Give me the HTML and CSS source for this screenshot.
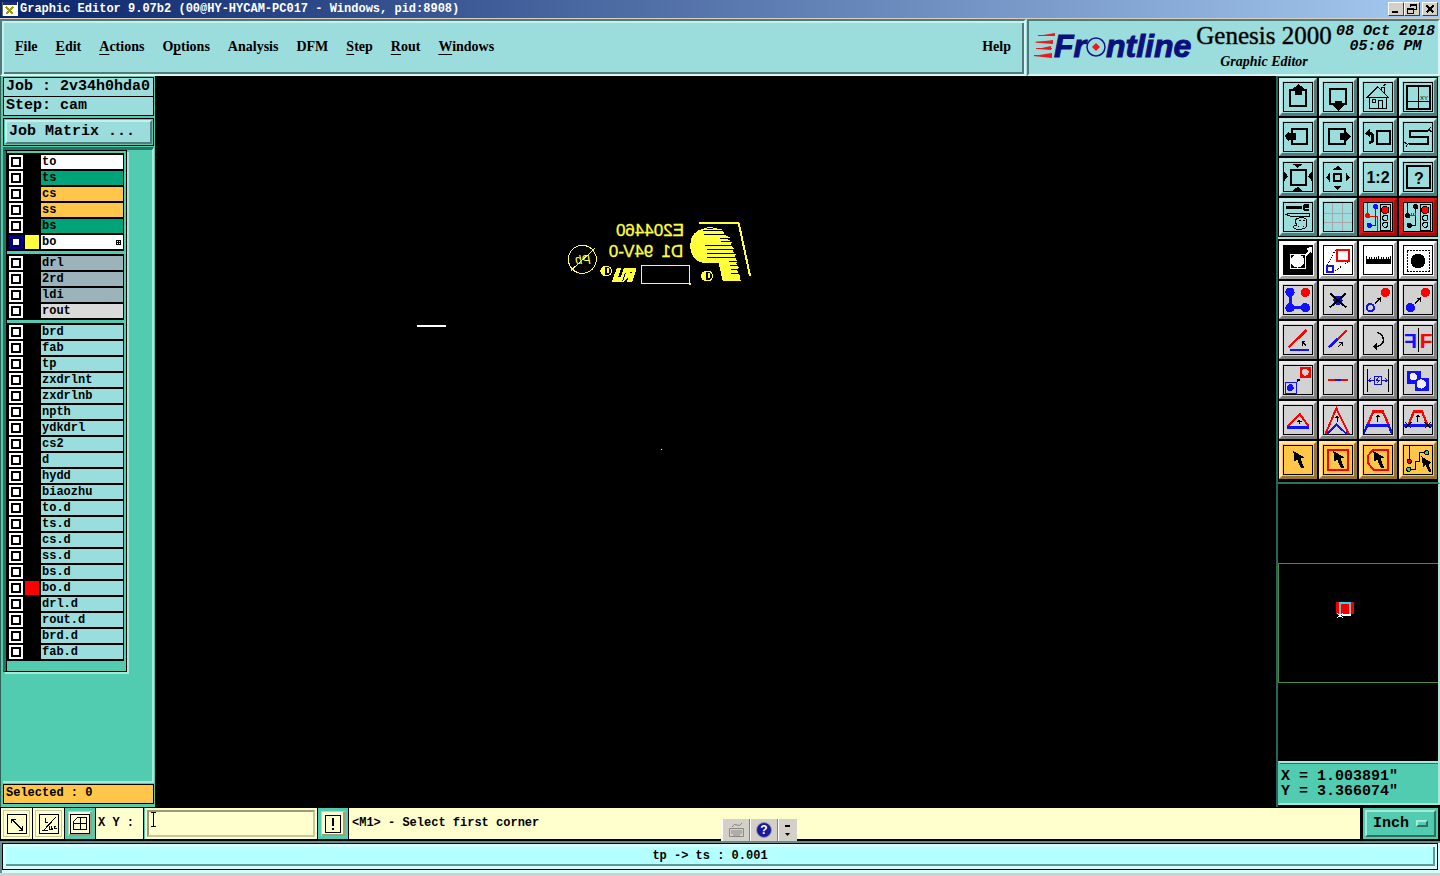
FILE: index.html
```html
<!DOCTYPE html>
<html lang="en">
<head>
<meta charset="utf-8">
<title>Graphic Editor 9.07b2</title>
<link rel="stylesheet" href="styles.css">
</head>
<body>
<div class="titlebar">
  <svg class="app-icon" viewBox="0 0 16 14"><rect width="16" height="14" fill="#fff"/><rect x="1" y="0" width="14" height="3" fill="#1c2a78"/><path d="M4 5l7 7M11 5l-7 7" stroke="#a09a10" stroke-width="2"/><path d="M0 14V0M16 0v14H0" stroke="#666" fill="none"/></svg>
  <h1 class="window-title">Graphic Editor 9.07b2 (00@HY-HYCAM-PC017 - Windows, pid:8908)</h1>
  <div class="window-controls">
    <button class="win-btn" aria-label="Minimize"><svg viewBox="0 0 12 10"><path d="M2 8h6" stroke="#000" stroke-width="2"/></svg></button>
    <button class="win-btn" aria-label="Restore"><svg viewBox="0 0 12 10"><path d="M4.500 3V.5h6v5H8M4 1.500h7M1.500 4.500h6v5h-6zM1 5.500h7" stroke="#000" fill="none"/></svg></button>
    <button class="win-btn win-close" aria-label="Close"><svg viewBox="0 0 12 10"><path d="M2.500 1.500l7 7M9.500 1.500l-7 7" stroke="#000" stroke-width="1.600"/></svg></button>
  </div>
</div>

<header class="header">
  <nav class="menubar">
    <button class="menu"><u>F</u>ile</button>
    <button class="menu"><u>E</u>dit</button>
    <button class="menu"><u>A</u>ctions</button>
    <button class="menu">O<u>p</u>tions</button>
    <button class="menu">Analysis</button>
    <button class="menu">DFM</button>
    <button class="menu"><u>S</u>tep</button>
    <button class="menu"><u>R</u>out</button>
    <button class="menu"><u>W</u>indows</button>
    <button class="menu menu-help">Help</button>
  </nav>
  <div class="brand">
    <svg class="logo" viewBox="0 -8 162 42" role="img" aria-label="Frontline">
      <path d="M4 3L22 0v3zM1 9.500L20 7v4zM4 16l14-3v4zM0 23l19-3v5z" fill="#f01818"/>
      <path d="M5 2.500h16M3 9h16M3 15.500h16M1 22.500h17" stroke="#f01818"/>
      <text class="logo-text" x="21" y="24">Fr</text>
      <text class="logo-text" x="73" y="24">ntline</text>
      <circle cx="63" cy="14" r="9" fill="#9bdcdc" stroke="#101890" stroke-width="1.500"/>
      <path d="M63 10l4 4-4 4-4-4z" fill="#f01818"/>
    </svg>
    <div class="product">
      <div class="product-name">Genesis 2000</div>
      <div class="product-part">Graphic Editor</div>
    </div>
    <div class="clock">08 Oct 2018<br>05:06 PM</div>
  </div>
</header>

<main class="workspace">
  <aside class="sidebar">
    <div class="job-box">
      <div class="job-line">Job : 2v34h0hda0</div>
      <div class="job-line">Step: cam</div>
    </div>
    <div class="matrix-box"><button class="matrix-btn">Job Matrix ...</button></div>
    <div class="layer-area">
      <div class="layer-list">
        <div class="layer-group">
          <label class="layer white"><input type="checkbox"><i></i><span>to</span></label>
          <label class="layer green"><input type="checkbox"><i></i><span>ts</span></label>
          <label class="layer orange"><input type="checkbox"><i></i><span>cs</span></label>
          <label class="layer orange"><input type="checkbox"><i></i><span>ss</span></label>
          <label class="layer green"><input type="checkbox"><i></i><span>bs</span></label>
          <label class="layer white work"><input type="checkbox" checked><i class="yellow"></i><span>bo<svg class="grid-mark" viewBox="0 0 5 5"><path d="M.5.5h4v4h-4zM2.500 0v5M0 2.500h5" fill="none" stroke="#000"/></svg></span></label>
        </div>
        <div class="layer-group">
          <label class="layer slate"><input type="checkbox"><i></i><span>drl</span></label>
          <label class="layer slate"><input type="checkbox"><i></i><span>2rd</span></label>
          <label class="layer slate"><input type="checkbox"><i></i><span>ldi</span></label>
          <label class="layer silver"><input type="checkbox"><i></i><span>rout</span></label>
        </div>
        <div class="layer-group">
          <label class="layer"><input type="checkbox"><i></i><span>brd</span></label>
          <label class="layer"><input type="checkbox"><i></i><span>fab</span></label>
          <label class="layer"><input type="checkbox"><i></i><span>tp</span></label>
          <label class="layer"><input type="checkbox"><i></i><span>zxdrlnt</span></label>
          <label class="layer"><input type="checkbox"><i></i><span>zxdrlnb</span></label>
          <label class="layer"><input type="checkbox"><i></i><span>npth</span></label>
          <label class="layer"><input type="checkbox"><i></i><span>ydkdrl</span></label>
          <label class="layer"><input type="checkbox"><i></i><span>cs2</span></label>
          <label class="layer"><input type="checkbox"><i></i><span>d</span></label>
          <label class="layer"><input type="checkbox"><i></i><span>hydd</span></label>
          <label class="layer"><input type="checkbox"><i></i><span>biaozhu</span></label>
          <label class="layer"><input type="checkbox"><i></i><span>to.d</span></label>
          <label class="layer"><input type="checkbox"><i></i><span>ts.d</span></label>
          <label class="layer"><input type="checkbox"><i></i><span>cs.d</span></label>
          <label class="layer"><input type="checkbox"><i></i><span>ss.d</span></label>
          <label class="layer"><input type="checkbox"><i></i><span>bs.d</span></label>
          <label class="layer"><input type="checkbox"><i class="red"></i><span>bo.d</span></label>
          <label class="layer"><input type="checkbox"><i></i><span>drl.d</span></label>
          <label class="layer"><input type="checkbox"><i></i><span>rout.d</span></label>
          <label class="layer"><input type="checkbox"><i></i><span>brd.d</span></label>
          <label class="layer"><input type="checkbox"><i></i><span>fab.d</span></label>
        </div>
      </div>
    </div>
    <div class="selected">Selected : 0</div>
  </aside>

  <section class="canvas" aria-label="Drawing area">
    <svg class="artwork" viewBox="0 0 600 255">
      <g fill="#ffff3c" stroke="none">
        <text class="mark" transform="translate(372 78) scale(-1 1)">E204460</text>
        <text class="mark" transform="translate(370 142) scale(-1 1)">D1</text>
        <text class="mark" transform="translate(280 142) scale(-1 1)">94V-0</text>
        <text class="mark-pb" transform="translate(92 162) scale(-1 1)">Pb</text>
        <path d="M434 56h52l8 18 16 8-6 6 12 9-4 8 10 10-4 8 10 10-4 8 8 12-4 8 8 12-4 8 6 12 4 20h-54l-12-54h-38c-30 0-48-24-48-52 0-29 18-51 46-51z"/>
        <path d="M171 174h13l-9 26h8l9-26h38l-13 41h-16l4-12-15 12h-34l4-14z"/>
        <path d="M136 168a15 15 0 0 0 0 30zM438 183a15 15 0 0 0 0 30z"/>
      </g>
      <path d="M196 188l-8 26M210 186h6" stroke="#000" stroke-width="3"/>
      <path d="M436 105h82M440 117h84M440 129h86M442 141h90M428 61h60M432 73h68M480 85h34M484 95h38M508 153h26M510 165h26M512 177h26M514 189h26" stroke="#000" stroke-width="3"/>
      <g fill="none" stroke="#ffff3c">
        <path d="M418 39h118M536 39l34 158" stroke-width="6"/>
        <path d="M428 58q24-10 44 0" stroke-width="3"/>
        <circle cx="67" cy="148" r="42" stroke-width="3"/>
        <path d="M32 182l72-66M244 167h145v54h-145z" stroke-width="3"/>
        <circle cx="141" cy="183" r="14" stroke-width="3"/><circle cx="443" cy="198" r="15" stroke-width="3"/>
        <path d="M145 174v16M447 189v16" stroke-width="6"/>
      </g>
      <rect x="386" y="218" width="7" height="6" fill="#ffff3c"/>
    </svg>
    <span class="trace"></span>
    <span class="dot"></span>
  </section>

  <aside class="tools">
    <div class="tool-grid cyan-tools">
      <button class="tool" aria-label="Pan up"><svg viewBox="16 15 84 84"><path class="k6" d="M35 37h48v46H35z"/><path class="f" d="M60 18l16 14h-6v18H49V32h-6z"/></svg></button>
      <button class="tool" aria-label="Pan down"><svg viewBox="16 15 84 84"><path class="k6" d="M35 33h48v45H35z"/><path class="f" d="M49 68h21v14h6L60 98 43 82h6z"/></svg></button>
      <button class="tool" aria-label="Home"><svg viewBox="16 15 84 84"><path class="k3" d="M26 58l31-32 31 32zM33 56v35h49V56M58 91V66h14v25M40 64h9v9h-9zM69 36V28h9v18M72 24l9-5"/></svg></button>
      <button class="tool" aria-label="Coordinates"><svg viewBox="16 15 84 84"><path class="k6" d="M24 24h69v68H24z"/><path class="k3" d="M58 24v68M24 70h69"/><text class="xy" x="64" y="66">XY</text></svg></button>
      <button class="tool" aria-label="Pan left"><svg viewBox="16 15 84 84"><path class="k6" d="M40 33h46v46H40z"/><path class="f" d="M18 55l14-16v6h20v21H32v6z"/></svg></button>
      <button class="tool" aria-label="Pan right"><svg viewBox="16 15 84 84"><path class="k6" d="M30 33h48v46H30z"/><path class="f" d="M97 55L82 39v6H64v21h18v6z"/></svg></button>
      <button class="tool" aria-label="Previous view"><svg viewBox="16 15 84 84"><path class="k6" d="M55 38h38v41H55z"/><path d="M30 47h8q4 0 4 6v12q0 8-12 10" fill="none" stroke="#000" stroke-width="8"/><path class="f" d="M19 46l14-12v24z"/></svg></button>
      <button class="tool" aria-label="Serpentine"><svg viewBox="16 15 84 84"><path class="k6" d="M88 38H33v19h54v20H30"/><path class="k3" d="M86 40l8-8M92 38v-6l6-4M92 36l6 6M30 76l-8 8M24 78l-6-6M24 80v6"/></svg></button>
      <button class="tool" aria-label="Zoom in"><svg viewBox="16 15 84 84"><path class="k6" d="M36 35h45v45H36z"/><path class="f" d="M42 18h30L57 29zM42 98h30L57 86zM16 40l12 15L16 70zM100 40L88 55l12 15z"/></svg></button>
      <button class="tool" aria-label="Zoom out"><svg viewBox="16 15 84 84"><path class="k6" d="M46 47h22v22H46z"/><path class="f" d="M57 23l14 12H43zM57 95l14-12H43zM23 58l11-15v30zM93 58L81 43v30z"/></svg></button>
      <button class="tool" aria-label="Scale 1:2"><svg viewBox="16 15 84 84"><text class="ratio" x="58" y="75">1:2</text></svg></button>
      <button class="tool" aria-label="Query"><svg viewBox="16 15 84 84"><path class="k6" d="M24 25h69v66H24z"/><text class="query" x="61" y="78">?</text></svg></button>
      <button class="tool" aria-label="Settings"><svg viewBox="16 15 84 84"><path d="M22 28h48" stroke="#000" stroke-width="8"/><path d="M92 20H78q-6 8 0 16h14M80 28h12" class="k6"/><path class="k3" d="M22 49l12-3h58v8H34zM50 66q8-10 26-6 12 2 8 14-4 4 0 10-4 10-22 10-20 0-18-8 2-6 10-4 2-4-4-8zM62 66h4M74 68h4M58 86h4M72 84h4"/></svg></button>
      <button class="tool" aria-label="Grid"><svg viewBox="16 15 84 84"><path d="M42 15v84M72 15v84M16 45h84M16 74h84" stroke="#a9a5a8" stroke-width="3"/></svg></button>
      <button class="tool alert" aria-label="Net check red"><svg viewBox="16 15 84 84"><path d="M27 16v38h29v45" fill="none" stroke="#f00" stroke-width="3"/><path d="M51 26v56H32" fill="none" stroke="#11f" stroke-width="4"/><circle cx="27" cy="53" r="8" fill="#f00"/><circle cx="51" cy="26" r="8" fill="#11f"/><circle cx="32" cy="82" r="8" fill="#11f"/><path class="k3" d="M64 18h32v78H64z"/><circle cx="80" cy="36" r="11" fill="#f00" stroke="#000" stroke-width="3"/><circle class="k3" cx="80" cy="60" r="8"/><circle class="k3" cx="80" cy="80" r="8"/></svg></button>
      <button class="tool alert" aria-label="Net check black"><svg viewBox="16 15 84 84"><path class="k3" d="M27 16v38M51 26v56H32M64 18h32v78H64z"/><circle cx="27" cy="53" r="8"/><circle cx="51" cy="26" r="8"/><circle cx="32" cy="82" r="8"/><path d="M35 53h16M37 44v8M43 44v8M49 44v8" stroke="#f00" stroke-width="3"/><circle cx="80" cy="36" r="11" fill="#f00" stroke="#000" stroke-width="3"/><circle class="k3" cx="80" cy="60" r="8"/><circle class="k3" cx="80" cy="80" r="8"/></svg></button>
    </div>
    <div class="tool-grid grey-tools">
      <button class="tool plain" aria-label="Change"><svg viewBox="16 15 84 84"><path class="f" d="M16 15h84v84H16z"/><circle cx="57" cy="60" r="20" fill="#fff"/><path d="M35 39h45v43H35z" fill="none" stroke="#fff" stroke-width="3"/><path d="M78 42l12-12-8-6 18-8v20l-6-2-12 14z" fill="#fff"/></svg></button>
      <button class="tool plain" aria-label="Transform"><svg viewBox="16 15 84 84"><path class="k3 dash" d="M25 72L52 24M44 92l50-32"/><path class="r6" d="M56 26h35v35H56z"/><path class="b6" d="M26 74h18v18H26z"/></svg></button>
      <button class="tool plain" aria-label="Measure"><svg viewBox="16 15 84 84"><path class="f" d="M22 54h75v14H22z"/><path class="k3" d="M23 44v12M31 48v8M38 48v8M46 48v8M53 48v8M60 44v12M67 48v8M74 48v8M82 48v8M89 48v8M95 44v12"/></svg></button>
      <button class="tool plain" aria-label="Pad"><svg viewBox="16 15 84 84"><path d="M26 27h65v65H26z" fill="none" stroke="#000" stroke-width="3" stroke-dasharray="6 3"/><circle cx="58" cy="60" r="22"/></svg></button>
      <button class="tool" aria-label="Copy pads"><svg viewBox="16 15 84 84"><path d="M34 34v46h46" fill="none" stroke="#11f" stroke-width="9"/><g fill="#11f"><circle cx="34" cy="34" r="14"/><circle cx="34" cy="80" r="14"/><circle cx="80" cy="80" r="14"/></g><circle cx="80" cy="34" r="14" fill="#f00"/></svg></button>
      <button class="tool" aria-label="Delete"><svg viewBox="16 15 84 84"><circle cx="58" cy="58" r="14" fill="#11c"/><path d="M34 37l48 42M82 37L34 79" stroke="#000" stroke-width="6"/></svg></button>
      <button class="tool" aria-label="Move copy"><svg viewBox="16 15 84 84"><circle cx="35" cy="80" r="11" fill="none" stroke="#11f" stroke-width="6"/><circle cx="80" cy="34" r="14" fill="#f00"/><path class="k3" d="M48 68l18-18M54 51h12v12"/></svg></button>
      <button class="tool" aria-label="Move"><svg viewBox="16 15 84 84"><circle cx="35" cy="80" r="14" fill="#11f"/><circle cx="80" cy="34" r="14" fill="#f00"/><path class="k3" d="M48 68l18-18M54 51h12v12"/></svg></button>
      <button class="tool" aria-label="Rotate line"><svg viewBox="16 15 84 84"><path class="r7" d="M30 79l54-52"/><path class="b6" d="M34 86h56"/><path class="k3" d="M82 74L70 62M70 74V62h10"/></svg></button>
      <button class="tool" aria-label="Extend line"><svg viewBox="16 15 84 84"><path class="b7" d="M30 80l28-27"/><path class="r7" d="M56 55l27-27"/><path class="k3" d="M60 77l12-13M61 65h11v11"/></svg></button>
      <button class="tool" aria-label="Rotate"><svg viewBox="16 15 84 84"><path d="M54 34q20 4 20 23 0 18-24 20" fill="none" stroke="#000" stroke-width="4"/><path class="f" d="M42 77l12-10v20z"/></svg></button>
      <button class="tool" aria-label="Mirror"><svg viewBox="16 15 84 84"><path class="k3" d="M59 22v72"/><text class="flip" x="63" y="82" fill="#f00">F</text><text class="flip" transform="translate(55 82) scale(-1 1)" fill="#11f">F</text></svg></button>
      <button class="tool" aria-label="Step move"><svg viewBox="16 15 84 84"><path fill="#f00" d="M64 18h33v33H64z"/><circle cx="80" cy="34" r="10" fill="#d2d2d2"/><path d="M21 65h31v31H21z" fill="none" stroke="#11f" stroke-width="3"/><circle cx="35" cy="80" r="10" fill="#11f"/><path class="k3" d="M54 62l8-8M56 54h7v7"/></svg></button>
      <button class="tool" aria-label="Break line"><svg viewBox="16 15 84 84"><path class="r7" d="M27 56h62"/><path class="b7" d="M48 56h20"/></svg></button>
      <button class="tool" aria-label="Resize gap"><svg viewBox="16 15 84 84"><path class="k3" d="M27 24v70M89 24v70"/><path d="M48 45h20v26H48zM31 58h16M70 58h15M36 52l-6 6 6 6M80 52l6 6-6 6M60 49l-6 8h8l-6 9" fill="none" stroke="#11c" stroke-width="3"/></svg></button>
      <button class="tool" aria-label="Merge"><svg viewBox="16 15 84 84"><path fill="#11f" d="M26 30h42v20h24v40H50V70H26z"/><circle cx="44" cy="47" r="11" fill="#f0f0f0"/><circle cx="68" cy="69" r="14" fill="#f0f0f0"/></svg></button>
      <button class="tool" aria-label="Shape low"><svg viewBox="16 15 84 84"><path d="M27 76l37-36 26 36" fill="none" stroke="#f00" stroke-width="6"/><path class="b7" d="M25 79h66"/><path class="k3" d="M62 70V58M56 63l6-5 6 5"/></svg></button>
      <button class="tool" aria-label="Shape high"><svg viewBox="16 15 84 84"><path d="M20 100l33-78 38 78" fill="none" stroke="#f00" stroke-width="6"/><path d="M25 99l29-28 30 28" fill="none" stroke="#11f" stroke-width="6"/><path class="k3" d="M56 62V46M50 52l6-6 6 6"/></svg></button>
      <button class="tool" aria-label="Shape wide"><svg viewBox="16 15 84 84"><path class="r7" d="M27 72l17-41h28l18 41"/><path class="b7" d="M14 98l12-25h64l10 25"/><path class="k3" d="M57 62V43M51 49l6-6 6 6"/></svg></button>
      <button class="tool" aria-label="Shape cut"><svg viewBox="16 15 84 84"><path class="r7" d="M29 72l17-41h24l16 41"/><path class="b7" d="M16 73h84"/><path class="k3" d="M57 62V43M51 49l6-6 6 6M20 64l18 18M38 64L20 82M78 64l18 18M96 64L78 82"/></svg></button>
      <button class="tool amber" aria-label="Select"><svg viewBox="16 15 84 84"><path class="f" d="M44 30l4 32 8-6 11 27 9-4-11-26 11-4z"/></svg></button>
      <button class="tool amber" aria-label="Select rectangle"><svg viewBox="16 15 84 84"><path class="r6" d="M28 26h61v60H28z"/><path class="f" d="M44 30l4 32 8-6 11 27 9-4-11-26 11-4z"/></svg></button>
      <button class="tool amber" aria-label="Select polygon"><svg viewBox="16 15 84 84"><path class="r6" d="M44 26h45v60H44L28 66V44z"/><path class="f" d="M44 30l4 32 8-6 11 27 9-4-11-26 11-4z"/></svg></button>
      <button class="tool amber" aria-label="Select net"><svg viewBox="16 15 84 84"><path class="k3" d="M32 16v40M84 35H61v25H50v25H30"/><g stroke="#000" stroke-width="3"><circle cx="32" cy="61" r="6" fill="#e00"/><circle cx="84" cy="35" r="6" fill="#1e3"/><circle cx="30" cy="85" r="6" fill="#1e3"/></g><path class="f" d="M68 46l6 33 7-7 10 22 8-3-10-22 10-4z"/></svg></button>
    </div>
    <div class="overview">
      <svg viewBox="0 0 20 16" class="overview-mark"><path fill="#e00" d="M1 0h18v12H1z"/><path d="M5 12V1h10v11" fill="none" stroke="#9aa" stroke-width="2"/><path d="M4 1h12" stroke="#2de" stroke-width="2"/><path d="M7 13h9" stroke="#fff" stroke-width="2"/><path d="M2 11l6 5M8 11l-6 5" stroke="#fff"/></svg>
    </div>
    <div class="coords">X = 1.003891"<br>Y = 3.366074"</div>
  </aside>
</main>

<footer class="command">
  <button class="cmd-btn" aria-label="Relative"><svg viewBox="0 0 20 20"><path d="M.5.5h19v19H.5zM4.500 5l11 11M4.500 9V5h4M15.500 12v4h-4"/></svg></button>
  <button class="cmd-btn" aria-label="Angle"><svg viewBox="0 0 20 20"><path d="M.5.5h19v19H.5zM3 16h6M4 17L17 3M6 4v4h3M11 12h-1v3h2v-3l2 4M17 12h-2v2h3"/></svg></button>
  <button class="cmd-btn cmd-on" aria-label="Snap"><svg viewBox="0 0 20 20"><path d="M.5.5h19v19H.5zM3.500 15.500v-8l4-4h9v12zM3.500 9.500h13M10.500 3v13"/></svg></button>
  <label class="xy-label" for="xy">X Y :</label>
  <div class="xy-wrap"><input id="xy" class="xy-input" type="text"><svg class="caret" viewBox="0 0 7 15"><path d="M1 .5h5M3.500 1v13M1 14.500h5" stroke="#000" fill="none"/></svg></div>
  <button class="cmd-btn cmd-on cmd-alert" aria-label="Confirm"><svg viewBox="0 0 20 20"><path d="M2.500 1.500h15v17h-15zM10 4v8M10 14v2" stroke-width="1.500"/></svg></button>
  <div class="prompt">&lt;M1&gt; - Select first corner</div>
  <div class="units-wrap"><button class="units">Inch <span class="units-knob"></span></button></div>
  <div class="ime">
    <button aria-label="Keyboard"><svg viewBox="0 0 18 16"><path d="M2.500 6.500h14v8h-14zM4 9h11M4 11h11M6 13h7M5 5q2-4 5-2t5-2" fill="none" stroke="#888"/></svg></button>
    <button aria-label="Help"><svg viewBox="0 0 18 16"><circle cx="9" cy="8" r="7.500" fill="#1a1a9c" stroke="#99a"/><text class="ime-q" x="9" y="12">?</text></svg></button>
    <button aria-label="Options" class="ime-opt"><svg viewBox="0 0 10 16"><path d="M2 4h5" stroke="#000" stroke-width="2"/><path d="M2 11h5l-2.500 3z"/></svg></button>
  </div>
</footer>
<div class="status"><div class="status-text">tp -&gt; ts : 0.001</div></div>
<div class="desk"></div>
</body>
</html>
```
FILE: styles.css
```css
* { box-sizing: border-box; }

body {
  margin: 0;
  min-height: 100vh;
  display: flex;
  flex-direction: column;
  background: #000;
  color: #000;
  font: bold 12px/14px "Liberation Mono", monospace;
}

button {
  margin: 0;
  padding: 0;
  border: 0;
  border-radius: 0;
  background: none;
  color: inherit;
  font: inherit;
}

svg { display: block; shape-rendering: crispEdges; }

/* window title */
.titlebar {
  display: flex;
  align-items: center;
  height: 19px;
  padding: 0 2px;
  gap: 2px;
  border-bottom: 1px solid #d4d0c8;
  background: linear-gradient(90deg, #0a246a, #a6caf0);
  color: #fff;
}
.app-icon { width: 16px; height: 14px; }
.window-title { flex: 1; margin: 0; font-size: 12px; white-space: nowrap; }
.window-controls { display: flex; }
.win-btn {
  width: 16px;
  height: 14px;
  border: 1px solid;
  border-color: #fff #404040 #404040 #fff;
  background: #d4d0c8;
}
.win-btn svg { width: 12px; height: 10px; margin: 0 auto; }
.win-close { margin-left: 2px; }

/* header */
.header { display: flex; height: 57px; background: #9bdcdc; }
.menubar {
  flex: 1;
  display: flex;
  align-items: center;
  gap: 18px;
  padding: 0 13px 2px;
  border: 2px solid;
  border-color: #527c7c #d8f4f4 #d8f4f4 #527c7c;
  box-shadow: inset 2px 2px #c6f0f0, inset -2px -2px #527c7c;
}
.menu { padding: 0; border: 0; font: bold 14px/18px "Liberation Serif", serif; }
.menu u { text-underline-offset: 3px; }
.menu-help { margin-left: auto; }
.brand {
  display: flex;
  align-items: flex-start;
  width: 413px;
  margin-left: 1px;
  padding-left: 4px;
  border: 2px solid;
  border-color: #527c7c #d8f4f4 #d8f4f4 #527c7c;
}
.logo { flex: none; width: 162px; height: 42px; margin-top: 4px; shape-rendering: auto; overflow: visible; }
.logo-text { font: italic bold 32px "Liberation Sans", sans-serif; fill: #0c107c; stroke: #0c107c; }
.product { width: 138px; text-align: center; white-space: nowrap; }
.product-name { font: 25px/30px "Liberation Serif", serif; -webkit-text-stroke: 1px rgba(0, 0, 0, 0.4); }
.product-part { margin-top: 2px; font: italic bold 14px/18px "Liberation Serif", serif; }
.clock { flex: 1; padding-top: 3px; text-align: center; white-space: nowrap; font: italic bold 15px/15px "Liberation Mono", monospace; }

/* workspace */
.workspace { flex: 1; display: flex; }
.sidebar {
  display: flex;
  flex-direction: column;
  width: 155px;
  padding: 1px 1px 3px 2px;
  border-left: 1px solid #2c6357;
  background: #52ccb0;
}
.job-box { border: 1px solid #000; }
.job-line { height: 18px; padding-left: 2px; background: #9bdcdc; font: bold 15px/18px "Liberation Mono", monospace; white-space: nowrap; }
.job-line + .job-line { height: 19px; border-top: 1px solid #000; }
.matrix-box { margin-top: 2px; padding: 1px; border: 1px solid #000; }
.matrix-btn {
  display: block;
  width: 100%;
  height: 24px;
  padding-left: 2px;
  border: 2px solid;
  border-color: #c6f0f0 #527c7c #527c7c #c6f0f0;
  background: #9bdcdc;
  font-size: 15px;
  line-height: 18px;
  text-align: left;
}
.layer-area {
  flex: 1;
  margin-top: 1px;
  border-top: 3px solid #2c7060;
  border-right: 2px solid #a8e8d8;
  border-bottom: 2px solid #a8e8d8;
}
.layer-list {
  width: 124px;
  padding: 2px 2px 10px 1px;
  border: 1px solid #000;
  border-left: 3px solid #2c7060;
  box-shadow: inset 1px 0 #000, 2px 2px #a8e8d8;
  display: grid;
  gap: 3px;
}
.layer-group { padding: 1px; background: #000; }
.layer { display: grid; grid-template-columns: 14px 14px 1fr; gap: 2px; padding: 1px 0 1px 1px; height: 16px; }
.layer input {
  appearance: none;
  width: 14px;
  height: 14px;
  margin: 0;
  border: 2px solid #fff;
  outline: 2px solid #000;
  outline-offset: -4px;
  background: #fff;
}
.layer.work input { border-color: #000090; outline-color: #000060; }
.layer span { display: flex; align-items: center; justify-content: space-between; padding: 0 2px 0 1px; background: #9bdcdc; }
.layer.white span { background: #fff; }
.layer.green span { background: #00a478; }
.layer.orange span { background: #ffc64a; }
.layer.slate span { background: #9bb4bc; }
.layer.silver span { background: #dadada; }
.yellow { background: #ffff3c; }
.red { background: #f00; }
.grid-mark { width: 5px; height: 5px; }
.selected { height: 20px; margin-top: 1px; padding-left: 2px; border: 1px solid #000; background: #ffc64a; line-height: 17px; }

.canvas { position: relative; flex: 1; background: #000; }
.artwork { position: absolute; left: 405px; top: 134px; width: 200px; height: 85px; }
.mark { font: 51px "Liberation Sans", sans-serif; stroke: #ffff3c; }
.mark-pb { font: italic 38px "Liberation Sans", sans-serif; }
.trace { position: absolute; left: 262px; top: 249px; width: 29px; height: 2px; background: #fff; }
.dot { position: absolute; left: 506px; top: 373px; width: 1px; height: 1px; background: #fff; }

/* tool panels */
.tools { display: flex; flex-direction: column; width: 164px; border-left: 2px solid #2c6357; }
.tool-grid {
  display: grid;
  grid-template-columns: repeat(4, 38px);
  gap: 2px;
  padding: 1px 0 1px 1px;
  border-top: 1px solid #2c7060;
  border-right: 2px solid #a8e8d8;
  border-bottom: 2px solid #a8e8d8;
}
.grey-tools { padding: 2px 0 3px 1px; border-top: 0; border-bottom-color: #2c7060; }
.tool {
  display: grid;
  place-items: center;
  width: 38px;
  height: 38px;
  border: 3px solid;
  border-color: #c6f0f0 #527c7c #527c7c #c6f0f0;
  background: #9bdcdc;
}
.tool svg { width: 30px; height: 30px; border: 1px solid #000; }
.grey-tools .tool { border-color: #ececec #808080 #808080 #ececec; background: #d2d2d2; }
.tool.plain svg { background: #fff; }
.grey-tools .plain { border-color: #fff #a0a0a0 #a0a0a0 #fff; background: #fff; }
.grey-tools .amber { border-color: #ffe4a4 #98762c #98762c #ffe4a4; background: #ffc64a; }
.cyan-tools .alert { border-color: #e01818 #a01010 #a01010 #e01818; background: #e01818; }
.alert svg { background: #9bdcdc; }
.f { fill: #000; }
.k3, .k6, .r6, .b6, .r7, .b7 { fill: none; stroke: #000; stroke-width: 3; }
.k6 { stroke-width: 6; }
.r6 { stroke: #f00; stroke-width: 6; }
.b6 { stroke: #11f; stroke-width: 6; }
.r7 { stroke: #f00; stroke-width: 7; }
.b7 { stroke: #11f; stroke-width: 7; }
.dash { stroke-dasharray: 3 3; }
.xy { font: 18px "Liberation Sans", sans-serif; }
.ratio { font: bold 48px "Liberation Sans", sans-serif; text-anchor: middle; }
.query { font: bold 48px "Liberation Sans", sans-serif; text-anchor: middle; }
.flip { font: bold 63px "Liberation Sans", sans-serif; }
.overview {
  flex: 1;
  display: flex;
  flex-direction: column;
  justify-content: center;
  border-right: 2px solid #a8e8d8;
}
.overview::before { content: ""; height: 118px; border: 1px solid #4a8c34; border-right: 0; }
.overview-mark { position: absolute; width: 20px; height: 16px; margin: -26px 0 0 57px; }
.coords {
  height: 44px;
  margin-bottom: 2px;
  padding: 6px 1px 0;
  border: 2px solid;
  border-color: #a8e8d8 #a8e8d8 #a8e8d8 #52ccb0;
  box-shadow: inset 0 1px #2c7060;
  background: #52ccb0;
  font: bold 15px/15px "Liberation Mono", monospace;
}

/* command line */
.command { position: relative; display: flex; height: 34px; padding: 1px 2px 1px 1px; border-bottom: 1px solid #000; gap: 1px; }
.cmd-btn { display: grid; place-items: center; width: 31px; background: #ffffce; border: 2px solid #ffffce; box-shadow: inset 0 0 0 1px #c8c8a0; }
.cmd-btn svg { width: 20px; height: 20px; fill: none; stroke: #000; }
.cmd-on { width: 30px; border: 3px solid #52ccb0; box-shadow: inset 1px 1px #d0d0a8, inset -2px -2px #a0a078; }
.xy-label { width: 47px; padding-left: 2px; background: #ffffce; line-height: 31px; }
.xy-wrap { position: relative; width: 173px; padding: 2px; border-left: 1px solid #52ccb0; background: #ffffce; }
.xy-input { width: 100%; height: 100%; border: 2px solid; border-color: #9c9c74 #c8c8a0 #c8c8a0 #9c9c74; border-radius: 0; background: #ffffce; font: inherit; outline: 0; }
.caret { position: absolute; left: 5px; top: 4px; width: 7px; height: 15px; }
.prompt { flex: 1; padding-left: 3px; background: #ffffce; line-height: 31px; }
.units-wrap { width: 75px; margin-left: 2px; padding: 2px; background: #52ccb0; }
.units { display: flex; align-items: center; justify-content: space-between; width: 100%; height: 100%; padding: 0 6px; border: 2px solid; border-color: #a8e8d8 #2c7060 #2c7060 #a8e8d8; background: #52ccb0; font-size: 15px; }
.units-knob { width: 12px; height: 7px; border: 2px solid; border-color: #a8e8d8 #2c7060 #2c7060 #a8e8d8; }
.ime { position: absolute; left: 50%; top: 12px; display: flex; margin-left: 1px; height: 22px; border-left: 1px solid #fff; }
.ime button { display: grid; place-items: center; width: 28px; border-right: 1px solid #808080; border-left: 1px solid #fff; background: #d4d0c8; }
.ime svg { width: 18px; height: 16px; shape-rendering: auto; }
.ime-q { font: bold 12px "Liberation Sans", sans-serif; fill: #fff; text-anchor: middle; }
.ime .ime-opt { width: 19px; border-right: 0; }
.ime .ime-opt svg { width: 10px; }

.status { height: 32px; padding: 0 2px 3px 0; border-top: 2px solid #5f8f8f; border-left: 2px solid #5f8f8f; background: #d4ffff; }
.status-text { height: 27px; padding-right: 20px; border: 1px solid #000; background: #b4ffff; box-shadow: inset 3px 3px #d4ffff, inset -2px -3px #d4ffff, inset -4px -5px #5f9898; text-align: center; line-height: 24px; }
.desk { height: 3px; background: #d4d0c8; }
```
